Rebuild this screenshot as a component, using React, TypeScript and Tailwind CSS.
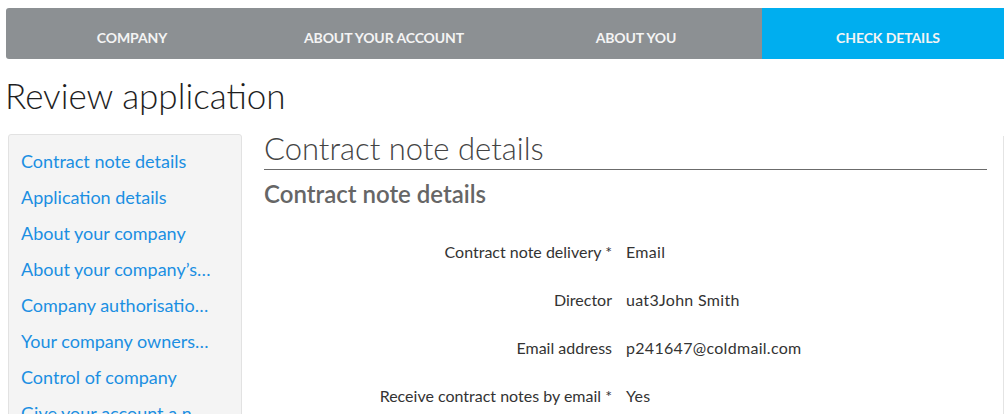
const steps = ["COMPANY", "ABOUT YOUR ACCOUNT", "ABOUT YOU", "CHECK DETAILS"];

const sections = [
  "Contract note details",
  "Application details",
  "About your company",
  "About your company’s address",
  "Company authorisations",
  "Your company ownership",
  "Control of company",
  "Give your account a name",
];

const fields = [
  { label: "Contract note delivery *", value: "Email" },
  { label: "Director", value: "uat3John Smith" },
  { label: "Email address", value: "p241647@coldmail.com" },
  { label: "Receive contract notes by email *", value: "Yes" },
];

export default function App() {
  return (
    <div className="h-[414px] w-[1004px] overflow-hidden bg-white font-['Lato',sans-serif]">
      <nav className="ml-[6px] mt-[8px] flex h-[51px] w-[1008px] overflow-hidden rounded-l-[3px] bg-[#8c9093]">
        {steps.map((s, i) => (
          <div
            key={s}
            className={`flex flex-1 items-center justify-center pt-[8px] text-[14px] font-bold tracking-[-0.1px] text-[#f4f4f4] ${
              i === 3 ? "bg-[#00aeef]" : ""
            }`}
          >
            {s}
          </div>
        ))}
      </nav>

      <h1 className="ml-[5px] mt-[16px] text-[35px] leading-[40px] font-light text-[#1e1e1e]">
        Review application
      </h1>

      <div className="mt-[19px] flex">
        <aside className="ml-[8px] w-[234px] shrink-0 rounded-t-[3px] border border-[#e2e2e2] bg-[#f4f4f4] pl-[12px] pr-[29px] pt-[13px]">
          {sections.map((s) => (
            <div
              key={s}
              className="h-[36px] truncate text-[18px] leading-[26px] text-[#1b8fe2]"
            >
              {s}
            </div>
          ))}
        </aside>

        <main className="ml-[22px] w-[723px]">
          <h2 className="-mt-[1px] border-b border-[#6b6b6b] pb-[5px] text-[31px] leading-[31px] font-light text-[#444]">
            Contract note details
          </h2>
          <h3 className="mt-[9px] text-[24px] leading-[30px] font-semibold text-[#666]">
            Contract note details
          </h3>

          <dl className="mt-[32px] flex flex-col gap-[26px]">
            {fields.map((f) => (
              <div key={f.label} className="flex h-[22px] items-center text-[16px] text-[#333]">
                <dt className="w-[348px] shrink-0 text-right">{f.label}</dt>
                <dd className="ml-[14px] tracking-[0.3px]">{f.value}</dd>
              </div>
            ))}
          </dl>
        </main>

        <div className="ml-auto mt-[2px] w-[1px] self-stretch bg-[#e4e4e4]" />
      </div>
    </div>
  );
}
